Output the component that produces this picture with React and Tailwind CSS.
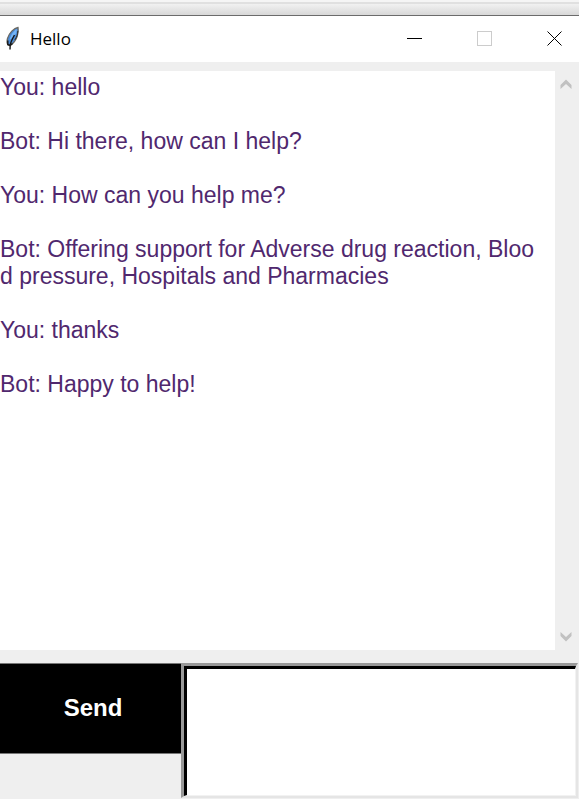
import { useState } from "react";

const messages = [
  { from: "You", text: "hello" },
  { from: "Bot", text: "Hi there, how can I help?" },
  { from: "You", text: "How can you help me?" },
  {
    from: "Bot",
    text: "Offering support for Adverse drug reaction, Blood pressure, Hospitals and Pharmacies",
  },
  { from: "You", text: "thanks" },
  { from: "Bot", text: "Happy to help!" },
];

function FeatherIcon() {
  return (
    <svg viewBox="0 0 16 26" className="h-[26px] w-4 shrink-0" aria-hidden="true">
      <path
        d="M13 1.500C9 2 4 7 2.500 12.500c-.7 2.500-.5 5 .5 6.500l2 .5c3.500-2 6-5.500 7.300-9.500.9-3 1.200-6 .7-8.500z"
        fill="#4a8ad6"
        stroke="#6b6963"
        strokeWidth="1.300"
      />
      <path d="M11.800 3C8.500 5 5.500 9.500 4.500 14l4-3c2.500-2.500 3.300-5 3.300-8z" fill="#74b4f5" />
      <path d="M9.500 9C7.500 12.500 5.800 16 5.200 19L5 23.500" fill="none" stroke="#141414" strokeWidth="1.400" />
      <path d="M2.800 14.500v4l2.400 1 2.300-2" fill="none" stroke="#1c1c1c" strokeWidth="1.500" />
      <path d="M12.800 5c0 3-1 6-3 9" fill="none" stroke="#2c2c2c" strokeWidth="1" />
    </svg>
  );
}

function TitleBar() {
  return (
    <header className="flex h-[46px] shrink-0 items-center justify-between bg-white pr-4 pl-[5px]">
      <div className="flex items-center gap-[9px]">
        <FeatherIcon />
        <h1 className="font-['Open_Sans',sans-serif] text-[17px] leading-6 text-black">Hello</h1>
      </div>
      <div className="flex items-center gap-[54px]">
        <button type="button" aria-label="Minimize">
          <svg viewBox="0 0 16 16" className="size-4" shapeRendering="crispEdges">
            <path d="M0 7.500h15" stroke="#000" />
          </svg>
        </button>
        <button type="button" aria-label="Maximize" disabled>
          <svg viewBox="0 0 16 16" className="size-4" shapeRendering="crispEdges">
            <path d="M.5.5h14v14H.5z" fill="none" stroke="#ccc" />
          </svg>
        </button>
        <button type="button" aria-label="Close">
          <svg viewBox="0 0 16 16" className="size-4">
            <path d="M.5.5l14 14M14.500.5l-14 14" stroke="#000" />
          </svg>
        </button>
      </div>
    </header>
  );
}

function ScrollArrow({ label, path }) {
  return (
    <button type="button" aria-label={label}>
      <svg viewBox="0 0 12 10" className="h-[10px] w-3">
        <path d={path} fill="#c1c1c1" />
      </svg>
    </button>
  );
}

export default function App() {
  const [draft, setDraft] = useState("");

  return (
    <div className="flex min-h-screen flex-col bg-[#efefef] font-['Liberation_Sans',Arial,sans-serif]">
      <div className="h-4 shrink-0 border-b border-[#6b6b6b] bg-[#f5f5f5] pt-[2px]">
        <div className="h-full border-t-2 border-[#e0e0e0] bg-linear-to-b from-[#f1f1f1] to-[#d8d8d8]" />
      </div>
      <TitleBar />
      <main className="flex flex-1 flex-col gap-[13px] pt-[9px]">
        <section className="flex flex-1">
          <div className="flex flex-1 flex-col gap-[27px] bg-white pt-[3px] pr-3 text-[23px] leading-[27px] break-all text-[#50286e]">
            {messages.map((message, i) => (
              <p key={i}>{`${message.from}: ${message.text}`}</p>
            ))}
          </div>
          <div className="flex w-6 shrink-0 flex-col items-center justify-between py-2 pr-[2px]">
            <ScrollArrow label="Scroll up" path="M6 .5l5.500 5.500v4L6 5 .5 10V6z" />
            <ScrollArrow label="Scroll down" path="M6 9.500L.5 4V0L6 5l5.500-5v4z" />
          </div>
        </section>
        <form className="flex items-start pr-px pb-px" onSubmit={(e) => e.preventDefault()}>
          <button
            type="submit"
            className="h-[91px] w-[181px] shrink-0 border-y border-[#777] bg-black pb-[2px] pl-[5px] text-2xl font-bold text-white"
          >
            Send
          </button>
          <div className="flex flex-1 border-t-3 border-r-2 border-b-2 border-l-3 border-t-[#999] border-r-[#e5e5e5] border-b-[#e5e5e5] border-l-[#999]">
            <textarea
              aria-label="Message"
              value={draft}
              onChange={(e) => setDraft(e.target.value)}
              className="h-[130px] w-full resize-none border-t-3 border-r border-b border-l-3 border-t-black border-r-[#f2f2f2] border-b-[#f2f2f2] border-l-black bg-white px-1 text-2xl text-[#50286e] outline-none"
            />
          </div>
        </form>
      </main>
    </div>
  );
}
